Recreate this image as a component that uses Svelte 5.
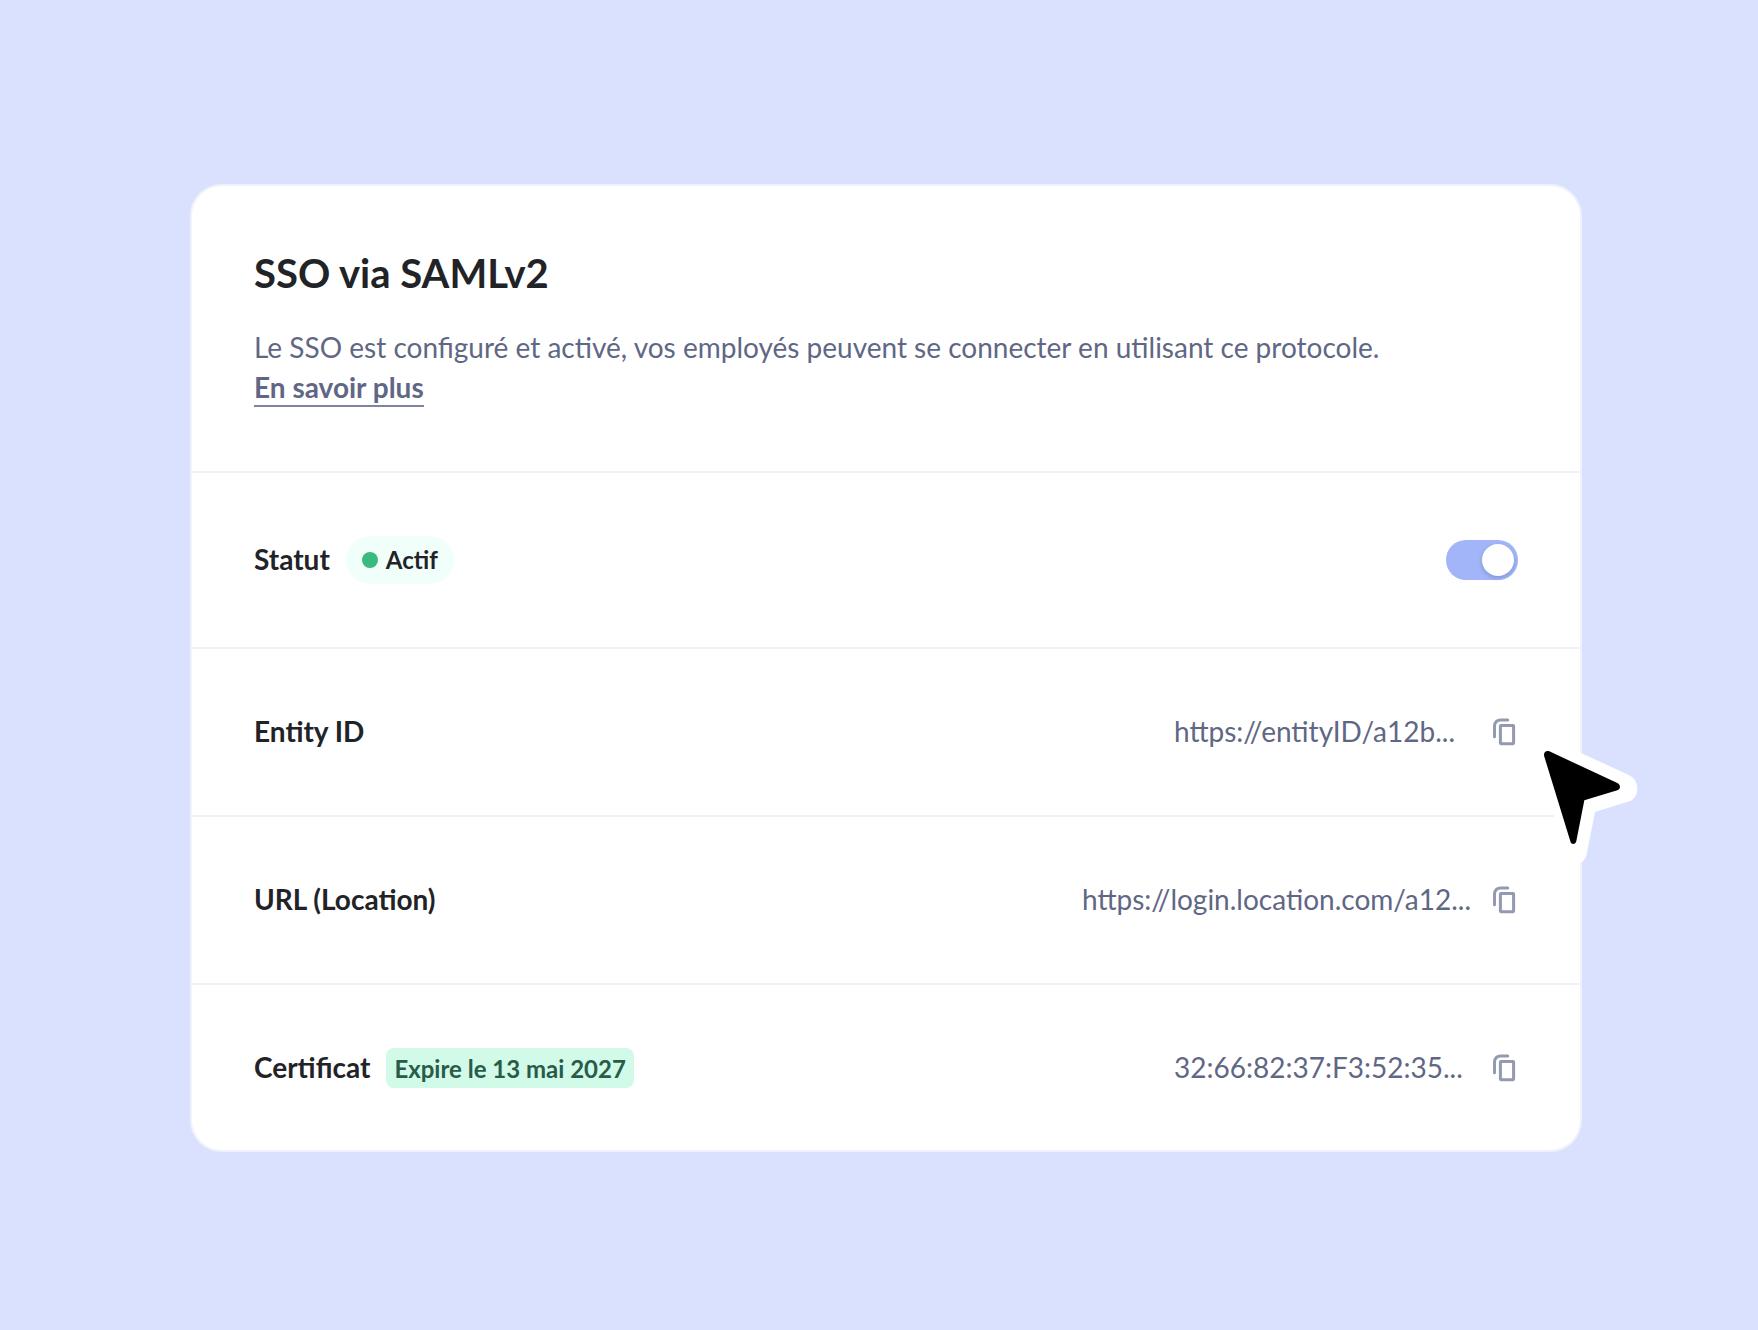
<script lang="ts">
    type Field = {
        label: string;
        value: string;
        wide?: boolean;
        expiry?: string;
    };

    const fields: Field[] = [
        { label: 'Entity ID', value: 'https://entityID/a12b...' },
        { label: 'URL (Location)', value: 'https://login.location.com/a12...', wide: true },
        { label: 'Certificat', value: '32:66:82:37:F3:52:35...', expiry: 'Expire le 13 mai 2027' }
    ];

    let enabled = $state(true);

    function copy(value: string) {
        navigator.clipboard?.writeText(value);
    }
</script>

<main class="page">
    <section class="card">
        <header class="intro">
            <h1>SSO via SAMLv2</h1>
            <p>
                Le SSO est configuré et activé, vos employés peuvent se connecter en utilisant ce protocole.
                <br />
                <a href="#en-savoir-plus">En savoir plus</a>
            </p>
        </header>

        <div class="row">
            <label class="label" for="sso-status">Statut</label>
            {#if enabled}
                <span class="pill"><span class="dot"></span>Actif</span>
            {/if}
            <input id="sso-status" class="toggle" type="checkbox" role="switch" bind:checked={enabled} />
        </div>

        {#each fields as field, i}
            <div class="row">
                <span class="label">{field.label}</span>
                {#if field.expiry}
                    <span class="badge">{field.expiry}</span>
                {/if}
                <span class="value" class:wide={field.wide}>{field.value}</span>
                <button type="button" class="copy" aria-label="Copier {field.label}" onclick={() => copy(field.value)}>
                    <svg viewBox="0 0 32 32" fill="none" stroke="currentColor" stroke-width="3" stroke-linecap="round" stroke-linejoin="round">
                        <rect x="14.4" y="9.5" width="13.2" height="18.2" rx="0.6" />
                        <path d="M21.7 3.9h-7.2a6 6 0 0 0-6 6v10.8" />
                    </svg>
                </button>
                {#if i === 0}
                    <svg class="cursor" viewBox="282 120 315 411" aria-hidden="true">
                        <path fill="#fff" d="M290 205Q282 140 340 151L565 254C585 263 592 280 592 296C592 314 582 329 568 334L465 366L442 482C440 500 434 512 420 520C400 530 380 515 375 490Z" />
                        <path d="M313 200C309 187 318 180 328 184L532 279C543 284 542 298 532 301L433 331L409 453C407 465 393 465 391 454Z" />
                    </svg>
                {/if}
            </div>
        {/each}
    </section>
</main>

<style>
    :global(body) {
        margin: 0;
        background: #d9e1ff;
    }

    .page {
        box-sizing: border-box;
        min-height: 100vh;
        padding: 184px 176px 178px 190px;
        font-family: Lato, 'Open Sans', sans-serif;
        font-size: 28px;
        line-height: 40px;
        color: #222327;
    }

    .card {
        background: #fff;
        border: 2px solid #eff2fb;
        border-radius: 32px;
    }

    .intro {
        padding: 63px 62px 64px;
    }

    h1 {
        margin: 0 0 30px;
        font-size: 40px;
        line-height: 48px;
        font-weight: 700;
    }

    p {
        margin: 0;
        color: #5f6785;
    }

    a {
        display: inline-block;
        box-sizing: border-box;
        height: 40px;
        border-bottom: 2px solid #7e859f;
        color: #5f6785;
        font-weight: 700;
        text-decoration: none;
    }

    .row {
        position: relative;
        display: flex;
        align-items: center;
        min-height: 40px;
        padding: 63px 62px;
        border-top: 2px solid #eef1f8;
    }

    .row:last-child {
        padding-bottom: 62px;
    }

    .label,
    .value {
        padding-bottom: 2px;
        line-height: 38px;
    }

    .label {
        margin-right: 16px;
        font-weight: 700;
    }

    .pill {
        display: flex;
        align-items: center;
        gap: 8px;
        padding: 4px 16px;
        border-radius: 24px;
        background: #f0fff9;
        font-size: 24px;
        line-height: 40px;
        font-weight: 700;
    }

    .dot {
        width: 16px;
        height: 16px;
        border-radius: 50%;
        background: #3aba80;
    }

    .badge {
        padding: 1px 8px 0;
        border-radius: 8px;
        background: #d1fae8;
        color: #285c48;
        font-size: 24px;
        line-height: 39px;
        font-weight: 700;
    }

    .toggle {
        appearance: none;
        box-sizing: border-box;
        width: 72px;
        height: 40px;
        margin: 0 0 0 auto;
        padding: 4px;
        border-radius: 20px;
        background: #c9ccd9;
        cursor: pointer;
    }

    .toggle::before {
        content: '';
        display: block;
        width: 32px;
        height: 32px;
        border-radius: 50%;
        background: #fff;
        box-shadow: 0 2px 4px rgba(39, 51, 110, 0.25);
    }

    .toggle:checked {
        background: #a1b5f8;
    }

    .toggle:checked::before {
        margin-left: auto;
    }

    .value {
        width: 296px;
        margin-left: auto;
        color: #5f6785;
        white-space: nowrap;
    }

    .value.wide {
        width: 388px;
    }

    .copy {
        width: 32px;
        height: 32px;
        margin-left: 16px;
        padding: 0;
        border: 0;
        background: none;
        color: #9399b0;
        cursor: pointer;
    }

    .copy svg {
        display: block;
    }

    .cursor {
        position: absolute;
        z-index: 1;
        top: 81px;
        right: -59px;
        width: 105px;
        height: 137px;
        pointer-events: none;
    }
</style>
